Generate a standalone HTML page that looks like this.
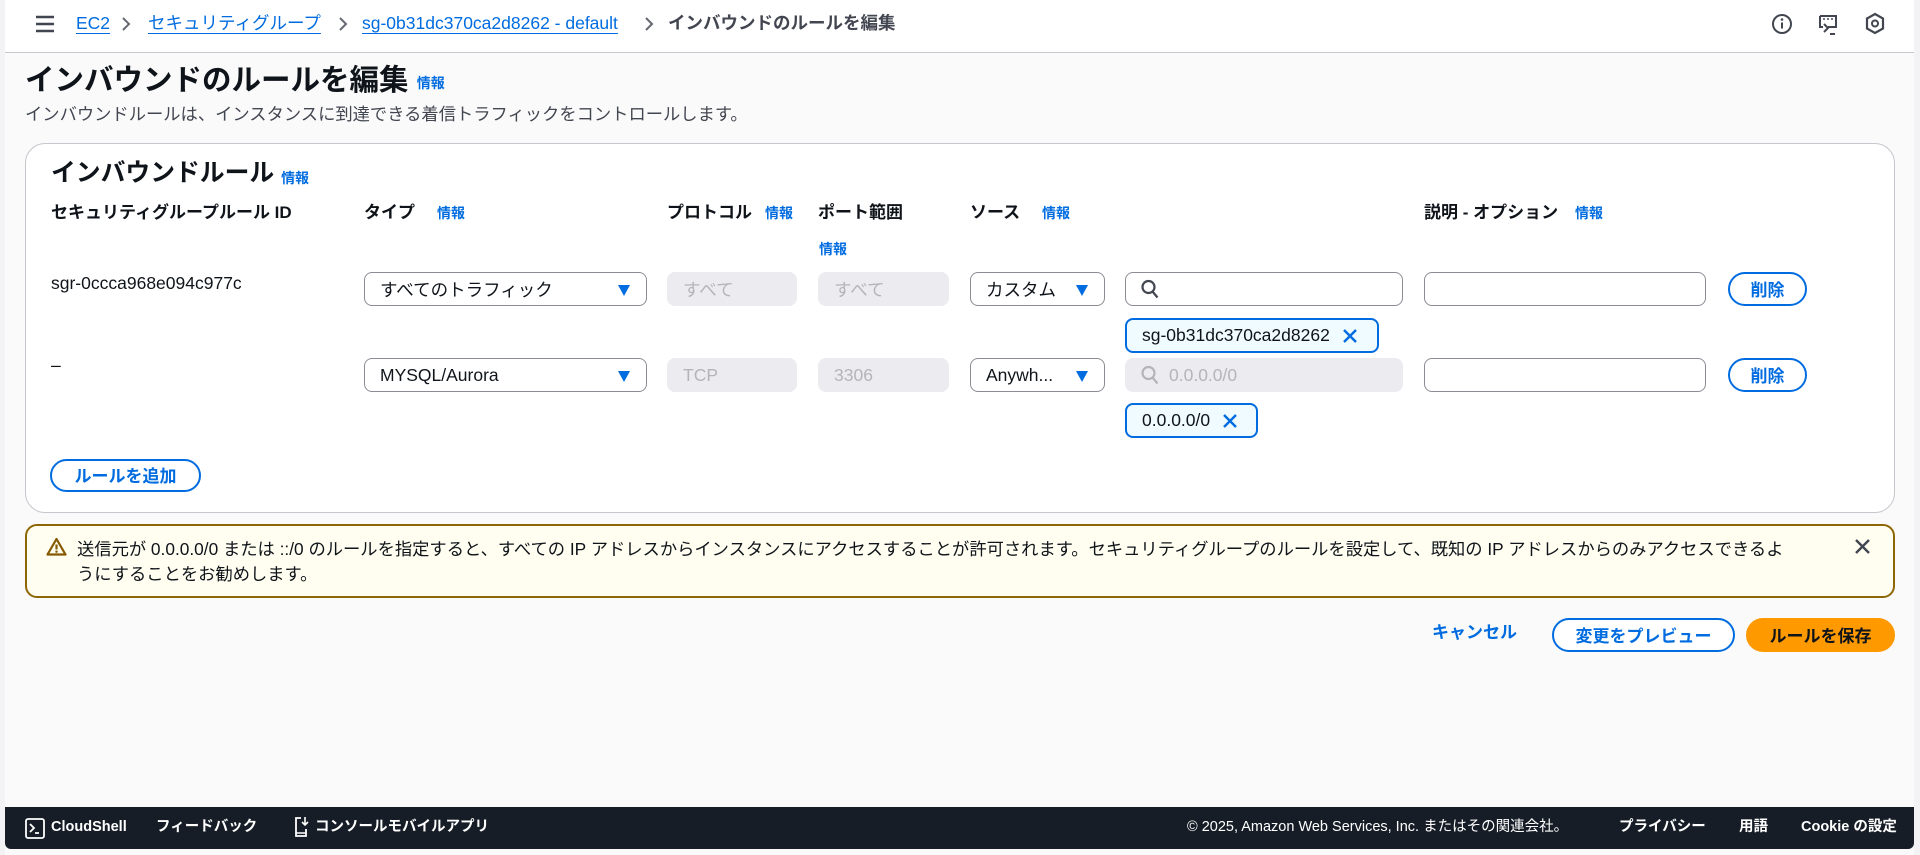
<!DOCTYPE html>
<html><head><meta charset="utf-8"><style>
*{box-sizing:border-box;margin:0;padding:0}
html,body{width:1920px;height:855px;overflow:hidden}
body{background:#f3f3f5;font-family:"Liberation Sans","Noto Sans CJK JP",sans-serif;color:#0f141a;font-size:17.5px;position:relative}
.main{position:absolute;left:5px;top:0;width:1909px;height:855px;background:#fafafa}
.top{position:absolute;left:5px;top:0;width:1909px;height:53px;background:#fff;border-bottom:1px solid #c6c6cd}
.a{position:absolute;white-space:nowrap;line-height:1}
.link{color:#006ce0}
.ul{text-decoration:underline;text-underline-offset:4px}
.info{color:#006ce0;font-weight:bold;font-size:14px}
.b{font-weight:bold}
.box{position:absolute;border:1px solid #8c8c94;border-radius:8px;background:#fff;height:34px;display:flex;align-items:center;padding-left:15px;font-size:17.5px}
.dis{background:#ebebf0;border-color:#ebebf0;color:#b4b4bb}
.caret{position:absolute;right:16px;top:12px;width:0;height:0;border-left:6px solid transparent;border-right:6px solid transparent;border-top:11px solid #006ce0}
.btn{position:absolute;border:2px solid #006ce0;border-radius:20px;color:#006ce0;font-weight:bold;display:flex;align-items:center;justify-content:center;background:#fff;font-size:17px;padding-bottom:2px}
.tok{position:absolute;border:2px solid #006ce0;border-radius:8px;background:#f0fbff;height:35px;display:flex;align-items:center;padding-left:15px;font-size:17.5px}
</style></head><body>
<div class="main"></div>
<div class="top"></div>
<svg class="a" style="left:35px;top:15px" width="20" height="18" viewBox="0 0 20 18"><path d="M1 2h18M1 9h18M1 16h18" stroke="#424650" stroke-width="2.4"/></svg>
<div class="a link ul" style="left:76px;top:15px">EC2</div>
<svg class="a" style="left:121px;top:16px" width="10" height="16"><path d="M2 2l6 6-6 6" stroke="#656871" stroke-width="2" fill="none"/></svg>
<div class="a link ul" style="left:148px;top:15px">セキュリティグループ</div>
<svg class="a" style="left:338px;top:16px" width="10" height="16"><path d="M2 2l6 6-6 6" stroke="#656871" stroke-width="2" fill="none"/></svg>
<div class="a link ul" style="left:362px;top:15px">sg-0b31dc370ca2d8262 - default</div>
<svg class="a" style="left:644px;top:16px" width="10" height="16"><path d="M2 2l6 6-6 6" stroke="#656871" stroke-width="2" fill="none"/></svg>
<div class="a b" style="left:668px;top:15px;color:#424650">インバウンドのルールを編集</div>
<svg class="a" style="left:1771px;top:13px" width="22" height="22" viewBox="0 0 22 22"><circle cx="11" cy="11" r="9" stroke="#424650" stroke-width="2" fill="none"/><path d="M11 9.5v6" stroke="#424650" stroke-width="2"/><circle cx="11" cy="6.5" r="1.3" fill="#424650"/></svg>
<svg class="a" style="left:1817px;top:13px" width="22" height="24" viewBox="0 0 22 24"><path d="M3 3h16v11h-8M3 3v11h3" stroke="#424650" stroke-width="2" fill="none"/><path d="M7 11l4 4-4 4M13 21h5" stroke="#424650" stroke-width="2" fill="none"/><path d="M6 6h2M10 6h2M14 6h2" stroke="#424650" stroke-width="1.5"/></svg>
<svg class="a" style="left:1864px;top:12px" width="22" height="24" viewBox="0 0 22 24"><path d="M11 2l8 4.5v10L11 21l-8-4.5v-10z" stroke="#424650" stroke-width="2.2" fill="none"/><circle cx="11" cy="11.5" r="3" stroke="#424650" stroke-width="2" fill="none"/></svg>

<div class="a b" style="left:25px;top:66px;font-size:29.5px">インバウンドのルールを編集 <span class="info" style="font-size:14px;vertical-align:2px">情報</span></div>
<div class="a" style="left:25px;top:106px;color:#424650;font-size:17.3px">インバウンドルールは、インスタンスに到達できる着信トラフィックをコントロールします。</div>

<div class="a" style="left:25px;top:143px;width:1870px;height:370px;background:#fff;border:1px solid #c6c6cd;border-radius:20px"></div>
<div class="a b" style="left:51px;top:162px;font-size:24.8px">インバウンドルール <span class="info" style="vertical-align:-2px">情報</span></div>

<div class="a b" style="left:51px;top:204px;font-size:17px">セキュリティグループルール ID</div>
<div class="a b" style="left:364px;top:204px;font-size:17px">タイプ</div><div class="a info" style="left:437px;top:206px">情報</div>
<div class="a b" style="left:667px;top:204px;font-size:17px">プロトコル</div><div class="a info" style="left:765px;top:206px">情報</div>
<div class="a b" style="left:818px;top:204px;font-size:17px">ポート範囲</div><div class="a info" style="left:819px;top:242px">情報</div>
<div class="a b" style="left:970px;top:204px;font-size:17px">ソース</div><div class="a info" style="left:1042px;top:206px">情報</div>
<div class="a b" style="left:1424px;top:204px;font-size:17px">説明 - オプション</div><div class="a info" style="left:1575px;top:206px">情報</div>

<div class="a" style="left:51px;top:275px">sgr-0ccca968e094c977c</div>
<div class="box" style="left:364px;top:272px;width:283px">すべてのトラフィック<span class="caret"></span></div>
<div class="box dis" style="left:667px;top:272px;width:130px">すべて</div>
<div class="box dis" style="left:818px;top:272px;width:131px">すべて</div>
<div class="box" style="left:970px;top:272px;width:135px">カスタム<span class="caret"></span></div>
<div class="box" style="left:1125px;top:272px;width:278px"><svg width="18" height="20" viewBox="0 0 18 20"><circle cx="7.5" cy="8" r="6" stroke="#424650" stroke-width="2.2" fill="none"/><path d="M11.5 12.5l5 6" stroke="#424650" stroke-width="2.2"/></svg></div>
<div class="box" style="left:1424px;top:272px;width:282px"></div>
<div class="btn" style="left:1728px;top:272px;width:79px;height:34px">削除</div>
<div class="tok" style="left:1125px;top:318px;width:254px">sg-0b31dc370ca2d8262<svg style="margin-left:12px" width="16" height="16" viewBox="0 0 16 16"><path d="M2 2l12 12M14 2L2 14" stroke="#006ce0" stroke-width="2.4"/></svg></div>

<div class="a" style="left:51px;top:357px">–</div>
<div class="box" style="left:364px;top:358px;width:283px">MYSQL/Aurora<span class="caret"></span></div>
<div class="box dis" style="left:667px;top:358px;width:130px">TCP</div>
<div class="box dis" style="left:818px;top:358px;width:131px">3306</div>
<div class="box" style="left:970px;top:358px;width:135px">Anywh...<span class="caret"></span></div>
<div class="box dis" style="left:1125px;top:358px;width:278px"><svg width="18" height="20" viewBox="0 0 18 20"><circle cx="7.5" cy="8" r="6" stroke="#b4b4bb" stroke-width="2.2" fill="none"/><path d="M11.5 12.5l5 6" stroke="#b4b4bb" stroke-width="2.2"/></svg><span style="margin-left:10px">0.0.0.0/0</span></div>
<div class="box" style="left:1424px;top:358px;width:282px"></div>
<div class="btn" style="left:1728px;top:358px;width:79px;height:34px">削除</div>
<div class="tok" style="left:1125px;top:403px;width:133px">0.0.0.0/0<svg style="margin-left:12px" width="16" height="16" viewBox="0 0 16 16"><path d="M2 2l12 12M14 2L2 14" stroke="#006ce0" stroke-width="2.4"/></svg></div>

<div class="btn" style="left:50px;top:459px;width:151px;height:33px">ルールを追加</div>

<div class="a" style="left:25px;top:524px;width:1870px;height:74px;background:#fffef0;border:2px solid #8d6605;border-radius:12px"></div>
<svg class="a" style="left:46px;top:537px" width="21" height="19" viewBox="0 0 21 19"><path d="M10.5 2L19.5 17.5H1.5z" stroke="#855900" stroke-width="2.2" fill="none" stroke-linejoin="round"/><path d="M10.5 7.5v5" stroke="#855900" stroke-width="2.2"/><circle cx="10.5" cy="14.7" r="1.2" fill="#855900"/></svg>
<div class="a" style="left:77px;top:537px;font-size:17.3px;line-height:25px;white-space:normal;width:1712px">送信元が 0.0.0.0/0 または ::/0 のルールを指定すると、すべての IP アドレスからインスタンスにアクセスすることが許可されます。セキュリティグループのルールを設定して、既知の IP アドレスからのみアクセスできるようにすることをお勧めします。</div>
<svg class="a" style="left:1854px;top:538px" width="17" height="17" viewBox="0 0 17 17"><path d="M2 2l13 13M15 2L2 15" stroke="#424650" stroke-width="2.4"/></svg>

<div class="a b link" style="left:1432px;top:624px;font-size:17px">キャンセル</div>
<div class="btn" style="left:1552px;top:618px;width:183px;height:34px">変更をプレビュー</div>
<div class="btn" style="left:1746px;top:618px;width:149px;height:34px;background:#ff9900;border-color:#ff9900;color:#0f141a">ルールを保存</div>

<div class="a" style="left:5px;top:807px;width:1909px;height:42px;background:#161d26;border-radius:0 0 6px 6px"></div>
<svg class="a" style="left:25px;top:818px" width="20" height="21" viewBox="0 0 20 21"><rect x="1" y="1" width="18" height="19" rx="2" stroke="#fff" stroke-width="1.8" fill="none"/><path d="M5 6l4 4-4 4M10 15h4" stroke="#fff" stroke-width="1.8" fill="none"/></svg>
<div class="a b" style="left:51px;top:820px;color:#fff;font-size:14.5px">CloudShell</div>
<div class="a b" style="left:156px;top:820px;color:#fff;font-size:14.5px">フィードバック</div>
<svg class="a" style="left:294px;top:816px" width="16" height="22" viewBox="0 0 16 22"><path d="M7 2H2v18h10v-7" stroke="#fff" stroke-width="1.8" fill="none"/><path d="M11 1v8M8 6l3 3 3-3M2 17h10" stroke="#fff" stroke-width="1.6" fill="none"/></svg>
<div class="a b" style="left:315px;top:820px;color:#fff;font-size:14.5px">コンソールモバイルアプリ</div>
<div class="a" style="left:1187px;top:820px;color:#fff;font-size:14.5px">© 2025, Amazon Web Services, Inc. またはその関連会社。</div>
<div class="a b" style="left:1619px;top:820px;color:#fff;font-size:14.5px">プライバシー</div>
<div class="a b" style="left:1739px;top:820px;color:#fff;font-size:14.5px">用語</div>
<div class="a b" style="left:1801px;top:820px;color:#fff;font-size:14.5px">Cookie の設定</div>
</body></html>
